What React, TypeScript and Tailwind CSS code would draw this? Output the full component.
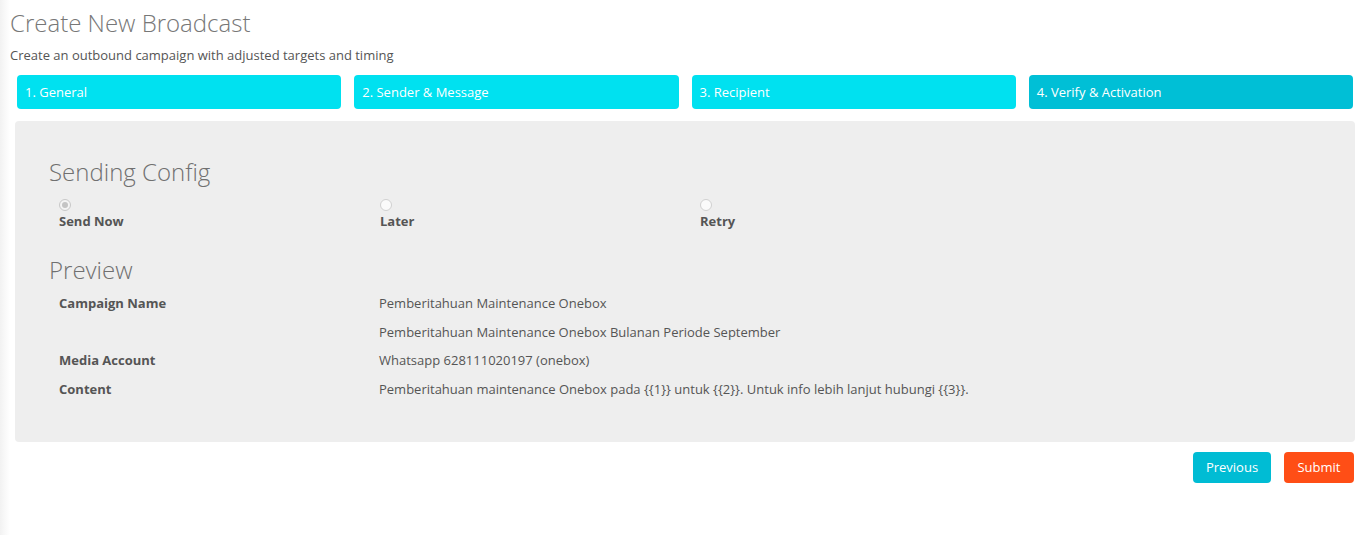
import React from "react";

const tabs = ["1. General", "2. Sender & Message", "3. Recipient", "4. Verify & Activation"];

export default function App() {
  return (
    <div
      className="min-h-[535px] w-full bg-white bg-[linear-gradient(to_right,#f2f2f2_0px,#fafafa_6px,#ffffff_10px)] text-[#555]"
      style={{ fontFamily: '"Open Sans", "Liberation Sans", sans-serif' }}
    >
      <div className="pl-[10px] pt-[7px]">
        <h1 className="text-[24px] font-light leading-[32px] text-[#777]">Create New Broadcast</h1>
        <p className="mt-[7px] text-[13px] leading-[18px] text-[#555]">
          Create an outbound campaign with adjusted targets and timing
        </p>
      </div>
      <div className="ml-[15px] mr-[14px]">
        <div className="mt-[11px] grid grid-cols-4 gap-[13px] px-[2px]">
          {tabs.map((t, i) => (
            <div
              key={t}
              className={`flex h-[34px] items-center rounded-[4px] pl-[8px] pt-[1px] text-[13px] text-white ${
                i === 3 ? "bg-[#00bfd6]" : "bg-[#00e1f0]"
              }`}
            >
              {t}
            </div>
          ))}
        </div>
        <div className="mt-[12px] h-[321px] rounded-[4px] bg-[#eeeeee] pl-[34px] pt-[36px]">
          <h2 className="text-[24px] font-light leading-[30px] text-[#707070]">Sending Config</h2>
          <div className="mt-[12px] grid grid-cols-[321px_320px_1fr] pl-[10px]">
            {[
              { label: "Send Now", checked: true },
              { label: "Later", checked: false },
              { label: "Retry", checked: false },
            ].map((r) => (
              <div key={r.label} className="flex flex-col">
                <span
                  className={`flex h-[12px] w-[12px] items-center justify-center rounded-full border ${
                    r.checked ? "border-[#c8c8c8] bg-[#f4f4f4]" : "border-[#d0d0d0] bg-[#fafafa]"
                  }`}
                >
                  {r.checked && <span className="h-[6px] w-[6px] rounded-full bg-[#c4c4c4]" />}
                </span>
                <span className="mt-[1px] text-[13px] font-bold leading-[18px] text-[#555]">{r.label}</span>
              </div>
            ))}
          </div>
          <h2 className="mt-[25px] text-[24px] font-light leading-[30px] text-[#707070]">Preview</h2>
          <div className="mt-[9px] grid grid-cols-[320px_1fr] gap-y-[9.67px] pl-[10px] text-[13px] leading-[19px] text-[#555]">
            <div className="font-bold">Campaign Name</div>
            <div>Pemberitahuan Maintenance Onebox</div>
            <div></div>
            <div>Pemberitahuan Maintenance Onebox Bulanan Periode September</div>
            <div className="font-bold">Media Account</div>
            <div>Whatsapp 628111020197 (onebox)</div>
            <div className="font-bold">Content</div>
            <div>Pemberitahuan maintenance Onebox pada {"{{1}}"} untuk {"{{2}}"}. Untuk info lebih lanjut hubungi {"{{3}}"}.</div>
          </div>
        </div>
        <div className="mt-[10px] flex justify-end gap-[13px] pr-[1px]">
          <button className="h-[31px] w-[78px] rounded-[4px] bg-[#00bcd4] text-[13px] text-white">Previous</button>
          <button className="h-[31px] w-[70px] rounded-[4px] bg-[#ff4e16] text-[13px] text-white">Submit</button>
        </div>
      </div>
    </div>
  );
}
